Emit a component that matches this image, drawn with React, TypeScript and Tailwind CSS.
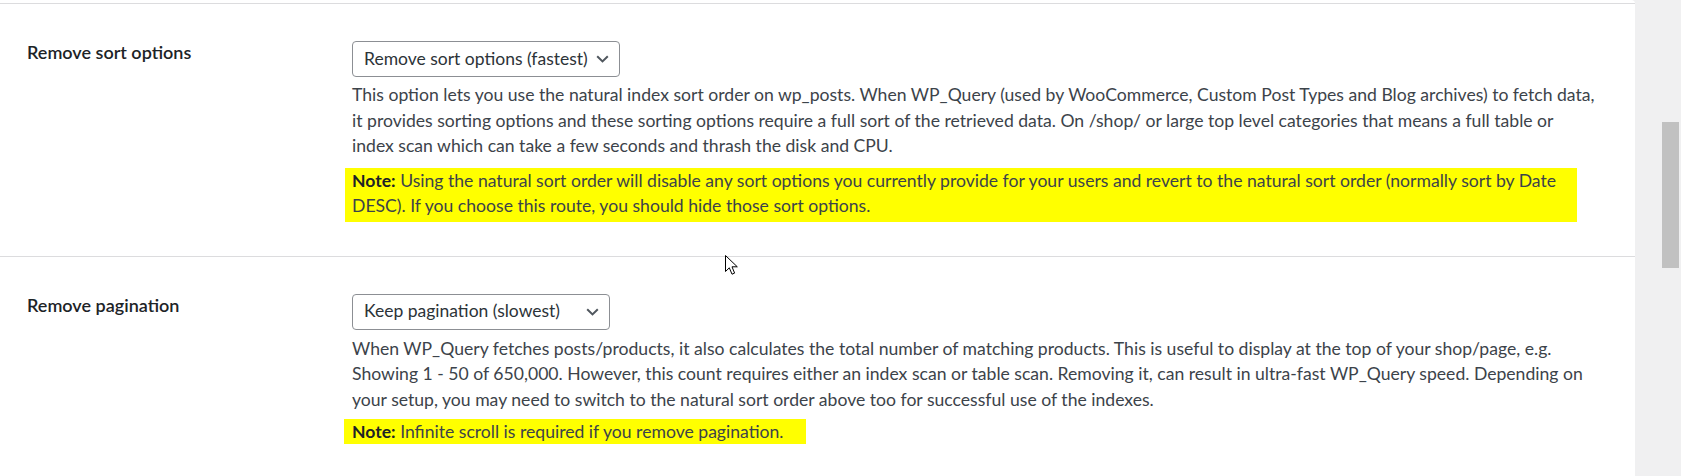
const font = { fontFamily: "Lato, 'Noto Sans', sans-serif" };

function SelectBox({ label, width }: { label: string; width: string }) {
  return (
    <div
      className={`flex h-[36px] items-center justify-between rounded-[4px] border border-[#8c8f94] bg-white pl-[11px] pr-[10px] text-[17.5px] text-[#2c3338] ${width}`}
    >
      <span>{label}</span>
      <svg width="13" height="8" viewBox="0 0 13 8" fill="none">
        <path d="M1.2 1.2 L6.5 6.4 L11.8 1.2" stroke="#50575e" strokeWidth="2" />
      </svg>
    </div>
  );
}

function Cursor() {
  return (
    <svg
      className="absolute left-[725px] top-[255px]"
      width="14"
      height="21"
      viewBox="0 0 14 21"
    >
      <path
        d="M0.5 0.5 L0.5 16.5 L4.3 12.8 L7 19.2 L9.6 18.1 L7 11.8 L12.3 11.8 Z"
        fill="#fff"
        stroke="#000"
        strokeWidth="1"
        strokeLinejoin="round"
      />
    </svg>
  );
}

export default function App() {
  return (
    <div className="relative flex h-[476px] w-[1681px] overflow-hidden bg-[#f0f0f1]" style={font}>
      <div className="w-[1635px] rounded-tr-[4px] bg-white pt-[3px]">
        <div className="border-t border-[#dcdcde]" />

        {/* Remove sort options */}
        <div className="flex border-b border-[#dcdcde] pb-[34px] pt-[37px]">
          <div className="-mt-[2px] w-[352px] shrink-0 pl-[27px] text-[18px] font-semibold leading-[26px] text-[#1d2327]">
            Remove sort options
          </div>
          <div className="w-[1270px]">
            <SelectBox label="Remove sort options (fastest)" width="w-[268px]" />
            <p className="mt-[5px] text-[17.6px] leading-[25.5px] text-[#3c434a]">
              This option lets you use the natural index sort order on wp_posts. When WP_Query (used by
              WooCommerce, Custom Post Types and Blog archives) to fetch data,
              <br />
              it provides sorting options and these sorting options require a full sort of the retrieved data. On
              /shop/ or large top level categories that means a full table or
              <br />
              index scan which can take a few seconds and thrash the disk and CPU.
            </p>
            <p className="-ml-[7px] mt-[9px] w-[1232px] bg-[#ffff00] pb-[3px] pl-[7px] pr-[7px] text-[17.6px] leading-[25.5px] text-[#3c434a]">
              <b className="font-bold text-[#1d2327]">Note:</b> Using the natural sort order will disable any sort
              options you currently provide for your users and revert to the natural sort order (normally sort by
              Date
              <br />
              DESC). If you choose this route, you should hide those sort options.
            </p>
          </div>
        </div>

        {/* Remove pagination */}
        <div className="flex pt-[37px]">
          <div className="-mt-[2px] w-[352px] shrink-0 pl-[27px] text-[18px] font-semibold leading-[26px] text-[#1d2327]">
            Remove pagination
          </div>
          <div className="w-[1270px]">
            <SelectBox label="Keep pagination (slowest)" width="w-[258px]" />
            <p className="mt-[6px] text-[17.6px] leading-[25.7px] text-[#3c434a]">
              When WP_Query fetches posts/products, it also calculates the total number of matching products. This
              is useful to display at the top of your shop/page, e.g.
              <br />
              Showing 1 - 50 of 650,000. However, this count requires either an index scan or table scan. Removing
              it, can result in ultra-fast WP_Query speed. Depending on
              <br />
              your setup, you may need to switch to the natural sort order above too for successful use of the
              indexes.
            </p>
            <p className="mt-[6px]">
              <span className="-ml-[8px] inline-block w-[462px] bg-[#ffff00] pl-[8px] text-[17.6px] leading-[25px] text-[#3c434a]">
                <b className="font-bold text-[#1d2327]">Note:</b> Infinite scroll is required if you remove
                pagination.
              </span>
            </p>
          </div>
        </div>
      </div>

      {/* scrollbar */}
      <div className="flex-1 pl-[27px] pt-[122px]">
        <div className="h-[146px] w-[17px] bg-[#c1c1c1]" />
      </div>

      <Cursor />
    </div>
  );
}
